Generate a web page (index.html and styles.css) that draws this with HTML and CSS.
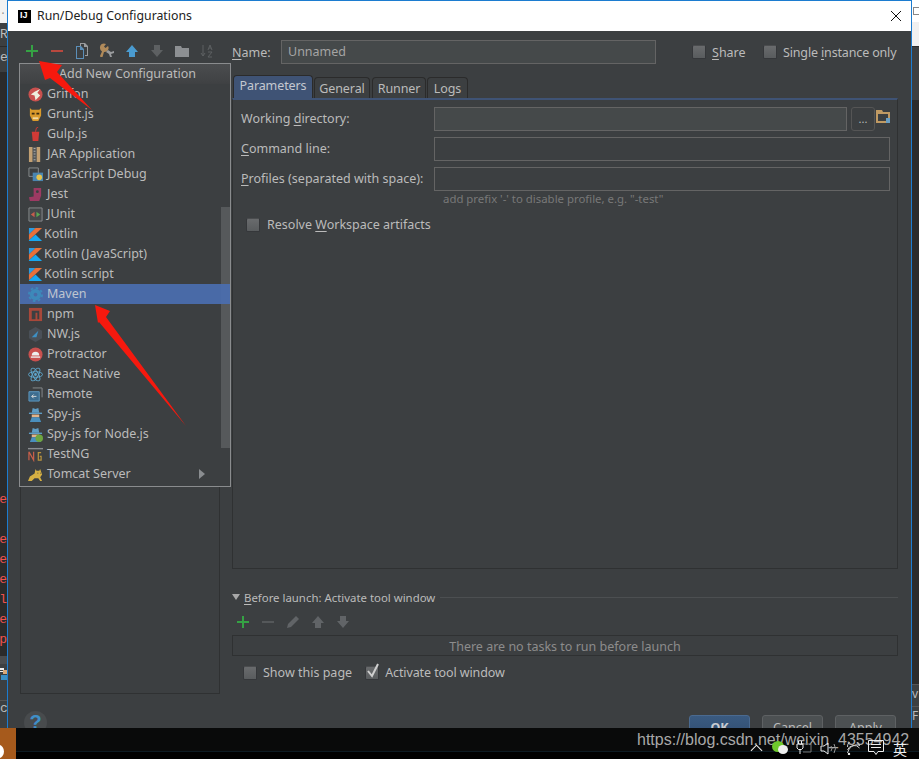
FILE: index.html
```html
<!DOCTYPE html>
<html lang="en">
<head>
<meta charset="utf-8">
<title>Run/Debug Configurations</title>
<link rel="stylesheet" href="styles.css">
</head>
<body>
<div class="screen">
  <div class="behind behind-left">
    <div class="bl-a">...</div>
    <div class="bl-b">R</div>
    <div class="bl-c">e</div>
    <div class="bl-log">
      <span>e</span><span class="gap">e</span><span>ne</span><span>e</span><span>al</span><span>e</span><span>rp</span>
    </div>
    <div class="bl-d"><svg class="bl-user" viewBox="0 0 7 12"><path d="M0 0h4v2H0zM0 3h4v1H0z" fill="#eee"/><path d="M3 2h4v4H3z" fill="#d9a878"/><path d="M1 7h6v5H1z" fill="#3b8fc4"/></svg></div>
    <div class="bl-e">c</div>
  </div>
  <div class="behind behind-right">
    <div class="br-a"><span class="br-win"></span></div>
    <div class="br-b"></div>
    <div class="br-c"></div>
    <div class="br-d">v</div>
    <div class="br-e">F</div>
  </div>

  <div class="dialog">
    <header class="titlebar">
      <span class="ij"><span>IJ</span></span>
      <span class="title">Run/Debug Configurations</span>
      <svg class="close" width="12" height="12" viewBox="0 0 12 12"><path d="M1 1l10 10M11 1L1 11" stroke="#111" stroke-width="1" fill="none"/></svg>
    </header>
    <div class="content">
      <aside class="left">
        <div class="toolbar">
          <svg class="ti" viewBox="0 0 16 16"><path d="M7 2h2v5h5v2H9v5H7V9H2V7h5z" fill="#35a244"/></svg>
          <svg class="ti" viewBox="0 0 16 16"><path d="M2 7h12v2H2z" fill="#b8483e"/></svg>
          <svg class="ti" viewBox="0 0 16 16"><path d="M6 0h5l3 3v10h-3v-1h2V4h-3V1H7v2H6z" fill="#9a9c9e"/><path d="M2 3h5l3 3v10H2zm1 1v11h6V7H6V4z" fill="#5b8fb9"/></svg>
          <svg class="ti" viewBox="0 0 16 16"><path d="M1 5a4 4 0 0 1 6-4L5 3.500 6.500 5 9 3a4 4 0 0 1-4 6L3.500 14H1.500l-.5-1L3 8.500A4 4 0 0 1 1 5z" fill="#b08a5a"/><path d="M7 9l2-2 3 2 3-1v2l-3 1 1 3h-2l-1-3z" fill="#9a9c9e"/></svg>
          <svg class="ti" viewBox="0 0 16 16"><path d="M8 2l6 7h-3v5H5V9H2z" fill="#4a9bd0"/></svg>
          <svg class="ti" viewBox="0 0 16 16"><path d="M8 14l6-7h-3V2H5v5H2z" fill="#5d6062"/></svg>
          <svg class="ti" viewBox="0 0 16 16"><path d="M1 3h6l1 2h7v9H1z" fill="#8d9093"/></svg>
          <svg class="ti" viewBox="0 0 16 16"><path d="M4 2v11M2 10l2 3 2-3" stroke="#5d6062" fill="none"/><path d="M9 7l2-5 2 5M10 5h2M9 9h4l-4 5h4" stroke="#5d6062" fill="none"/></svg>
        </div>
        <div class="tree"></div>
        <div class="help">?</div>
      </aside>

      <main class="right">
        <div class="name-row">
          <label class="lbl"><u>N</u>ame:</label>
          <div class="field name-field">Unnamed</div>
          <span class="cb share-cb"></span><span class="cb-text share"><u>S</u>hare</span>
          <span class="cb single-cb"></span><span class="cb-text single">Single <u>i</u>nstance only</span>
        </div>

        <div class="tabs">
          <span class="tab active">Parameters</span>
          <span class="tab t-general">General</span>
          <span class="tab t-runner">Runner</span>
          <span class="tab t-logs">Logs</span>
        </div>
        <section class="panel">
          <div class="form-row">
            <span class="form-label">Working <u>d</u>irectory:</span>
            <div class="field disabled grow"></div>
            <div class="browse">...</div>
            <svg class="folder" viewBox="0 0 14 13"><path d="M0 0h6l1 2h7v11H0z" fill="#c09a63"/><path d="M2 4h10v7H2z" fill="#3c3f41"/><path d="M10 8h4v5h-4z" fill="#6a9fc4"/></svg>
          </div>
          <div class="form-row">
            <span class="form-label"><u>C</u>ommand line:</span>
            <div class="field grow"></div>
          </div>
          <div class="form-row">
            <span class="form-label"><u>P</u>rofiles (separated with space):</span>
            <div class="field grow"></div>
          </div>
          <div class="hint">add prefix '-' to disable profile, e.g. "-test"</div>
          <div class="resolve"><span class="cb"></span><span class="cb-text">Resolve <u>W</u>orkspace artifacts</span></div>
        </section>

        <div class="before-head">
          <svg class="tri" viewBox="0 0 8 6"><path d="M0 0h8L4 6z" fill="#a8a8a8"/></svg>
          <span><u>B</u>efore launch: Activate tool window</span>
          <span class="rule"></span>
        </div>
        <div class="before-tools">
          <svg class="ti" viewBox="0 0 16 16"><path d="M7 2h2v5h5v2H9v5H7V9H2V7h5z" fill="#35a244"/></svg>
          <svg class="ti" viewBox="0 0 16 16"><path d="M2 7h12v2H2z" fill="#55585a"/></svg>
          <svg class="ti" viewBox="0 0 16 16"><path d="M11 2l3 3-8 8-4 1 1-4z" fill="#616467"/></svg>
          <svg class="ti" viewBox="0 0 16 16"><path d="M8 2l6 7h-3v5H5V9H2z" fill="#616467"/></svg>
          <svg class="ti" viewBox="0 0 16 16"><path d="M8 14l6-7h-3V2H5v5H2z" fill="#616467"/></svg>
        </div>
        <div class="tasks">There are no tasks to run before launch</div>
        <div class="opts">
          <span class="cb"></span><span class="cb-text">Show this page</span>
          <span class="cb checked activate-cb"><svg viewBox="0 0 14 17"><path d="M2 8l4 5L12 1" stroke="#cfcfcf" stroke-width="2" fill="none"/></svg></span><span class="cb-text activate">Activate tool window</span>
        </div>
        <div class="buttons">
          <span class="btn primary">OK</span>
          <span class="btn">Cancel</span>
          <span class="btn">Apply</span>
        </div>
      </main>
    </div>
  </div>

  <div class="popup">
    <div class="popup-title">Add New Configuration</div>
    <div class="popup-body">
      <ul class="list">
        <li><svg class="ic" viewBox="0 0 16 16"><circle cx="8" cy="8" r="7.500" fill="#c9504e"/><path d="M3 8l4-3 6-3-3 4 3 3-5 5-1-5z" fill="#eed"/></svg>Griffon</li>
        <li><svg class="ic" viewBox="0 0 16 16"><path d="M2 1l2 2h8l2-2v8l-3 6H5L2 9z" fill="#d99a2b"/><path d="M4 6h3v2H4zM9 6h3v2H9z" fill="#3b2a10"/><path d="M5 11h6v2H5z" fill="#f2d9a0"/></svg>Grunt.js</li>
        <li><svg class="ic" viewBox="0 0 16 16"><path d="M4 5h8l-1 10H5z" fill="#d13a36"/><path d="M8 5l1-4 2-1" stroke="#d13a36" fill="none"/></svg>Gulp.js</li>
        <li><svg class="ic" viewBox="0 0 16 16"><path d="M1 0h4v16H1zM9 0h4v16H9z" fill="#c2a073"/><path d="M5 0h4v16H5z" fill="#55585a"/><path d="M6 1h2v1H6zM6 4h2v1H6zM6 7h2v1H6zM6 10h2v1H6zM6 13h2v1H6z" fill="#aaa"/></svg>JAR Application</li>
        <li><svg class="ic" viewBox="0 0 16 16"><path d="M1 1h10v9H1z" fill="none" stroke="#8a8d90"/><path d="M5 6h11v9H5z" fill="#4a85b0"/><circle cx="12" cy="11" r="3" fill="#e6c34a"/></svg>JavaScript Debug</li>
        <li><svg class="ic" viewBox="0 0 16 16"><path d="M6 1h8v8l-2 6H2l-1-4 5-1z" fill="#9c3a63"/><circle cx="10" cy="5" r="1.500" fill="#3c3f41"/></svg>Jest</li>
        <li><svg class="ic" viewBox="0 0 16 16"><path d="M1 1h14v14H1z" fill="#45484a" stroke="#8a8d90"/><path d="M7 5v6L3 8z" fill="#c65d4d"/><path d="M9 5v6l4-3z" fill="#5aa552"/></svg>JUnit</li>
        <li class="kot"><svg class="ic" viewBox="0 0 16 16"><path d="M1 1h7L1 8z" fill="#2c9be0"/><path d="M8 1h7L1 14V8z" fill="#e8703a"/><path d="M8 8l7 7H1v-1z" fill="#18a7f0"/></svg>Kotlin</li>
        <li class="kot"><svg class="ic" viewBox="0 0 16 16"><path d="M1 1h7L1 8z" fill="#2c9be0"/><path d="M8 1h7L1 14V8z" fill="#e8703a"/><path d="M8 8l7 7H1v-1z" fill="#18a7f0"/></svg>Kotlin (JavaScript)</li>
        <li class="kot"><svg class="ic" viewBox="0 0 16 16"><path d="M1 1h7L1 8z" fill="#2c9be0"/><path d="M8 1h7L1 14V8z" fill="#e8703a"/><path d="M8 8l7 7H1v-1z" fill="#18a7f0"/></svg>Kotlin script</li>
        <li class="sel"><svg class="ic" viewBox="0 0 16 16"><circle cx="8" cy="8" r="6" fill="#3e8fc4"/><circle cx="8" cy="8" r="7" fill="none" stroke="#3e8fc4" stroke-width="2" stroke-dasharray="2.750 2.750"/><circle cx="8" cy="8" r="2" fill="#4b6eaf"/></svg>Maven</li>
        <li><svg class="ic" viewBox="0 0 16 16"><path d="M1 1h14v14H1z" fill="#a8483a"/><path d="M4 4h8v9h-2V6H8v7H4z" fill="#3c3f41"/></svg>npm</li>
        <li><svg class="ic" viewBox="0 0 16 16"><path d="M8 0l7 4v8l-7 4-7-4V4z" fill="#4a5058"/><path d="M4 11l7-7-2 7z" fill="#3e8fc4"/></svg>NW.js</li>
        <li><svg class="ic" viewBox="0 0 16 16"><circle cx="8" cy="8" r="7.500" fill="#c9504e"/><path d="M4 9a4 4 0 0 1 8 0z" fill="#eee"/><path d="M3 10h10v1.500H3z" fill="#eee"/></svg>Protractor</li>
        <li><svg class="ic" viewBox="0 0 16 16"><g fill="none" stroke="#5fa8cf"><ellipse cx="8" cy="8" rx="7.500" ry="3"/><ellipse cx="8" cy="8" rx="7.500" ry="3" transform="rotate(60 8 8)"/><ellipse cx="8" cy="8" rx="7.500" ry="3" transform="rotate(120 8 8)"/></g><circle cx="8" cy="8" r="1.500" fill="#5fa8cf"/></svg>React Native</li>
        <li><svg class="ic" viewBox="0 0 16 16"><path d="M5 1h10v10" fill="none" stroke="#8a8d90"/><path d="M1 5h11v10H1z" fill="#3d6c8e" stroke="#5f9cc4"/><path d="M9 10H4M6 8l-2 2 2 2" stroke="#ddd" fill="none"/></svg>Remote</li>
        <li><svg class="ic" viewBox="0 0 16 16"><path d="M4 6l1-5 3 1 3-1 1 5z" fill="#5f9cc4"/><path d="M1 6h14v1.500H1z" fill="#5f9cc4"/><path d="M4 8h8v3H4z" fill="#e2b48a"/><path d="M2 16l2-5h8l2 5z" fill="#4a8fbe"/></svg>Spy-js</li>
        <li><svg class="ic" viewBox="0 0 16 16"><path d="M4 6l1-5 3 1 3-1 1 5z" fill="#5f9cc4"/><path d="M1 6h14v1.500H1z" fill="#5f9cc4"/><path d="M4 8h8v3H4z" fill="#e2b48a"/><path d="M2 16l2-5h8l2 5z" fill="#4a8fbe"/><circle cx="12" cy="12" r="4" fill="#6ea53f"/></svg>Spy-js for Node.js</li>
        <li><svg class="ic" viewBox="0 0 16 16"><path d="M0 1h16v1.500H0z" fill="#8a8d90"/><path d="M1 5v9M1 5l5 9V5" stroke="#c9604a" stroke-width="1.300" fill="none"/><path d="M14 6h-3v8h3v-4h-1.500" stroke="#b8923f" stroke-width="1.300" fill="none"/></svg>TestNG</li>
        <li><svg class="ic" viewBox="0 0 16 16"><path d="M0 15l2-5 5-3 1-5 1 2h3l1-2 2 6-2 3 2 4h-2l-2-3H7l-3 3z" fill="#d6b043"/><path d="M10 6h1v1h-1zM13 6h1v1h-1z" fill="#3c3f41"/></svg><span class="li-text">Tomcat Server</span><svg class="sub" viewBox="0 0 6 10"><path d="M0 0l6 5-6 5z" fill="#8a8d90"/></svg></li>
      </ul>
      <div class="scroll"><div class="thumb"></div></div>
    </div>
  </div>

  <svg class="arrows" viewBox="0 0 919 759">
    <path d="M39 61l23 4-5 7 35 38-42-32-5 2z" fill="#f6190e"/>
    <path d="M95 305l15 6-4 6 80 109-87-104-1 1z" fill="#f6190e"/>
  </svg>

  <footer class="taskbar">
    <div class="start"></div>
    <div class="taskline"></div>
    <div class="mark">https://blog.csdn.net/weixin_43554942</div>
    <div class="tray">
      <svg class="t-chev" viewBox="0 0 14 8"><path d="M1 7l6-6 6 6" stroke="#eee" fill="none" stroke-width="1.200"/></svg>
      <svg class="t-chat" viewBox="0 0 16 13"><ellipse cx="6" cy="5.500" rx="6" ry="5.500" fill="#6fc92c"/><ellipse cx="11" cy="8.500" rx="5" ry="4.500" fill="#eee"/></svg>
      <svg class="t-plug" viewBox="0 0 16 13"><path d="M2.500 0v3M5.500 0v3M1 3h6v4L5.500 8.500h-3L1 7zM4 8.500V13" stroke="#eee" fill="none"/><path d="M8 3h7v8H7" stroke="#777" fill="none"/></svg>
      <svg class="t-vol" viewBox="0 0 17 13"><path d="M1 4h3l4-3v11L4 9H1z" stroke="#eee" fill="none"/><path d="M11 4q2 2.500 0 5M14 2q3 4.500 0 9" stroke="#999" fill="none"/></svg>
      <svg class="t-wifi" viewBox="0 0 13 13"><path d="M.5 11a10 10 0 0 1 12-8M.5 8a7 7 0 0 1 12-2M.5 5a5 5 0 0 1 12-1" stroke="#ccc" fill="none"/><circle cx="2" cy="12" r="1.200" fill="#eee"/></svg>
      <svg class="t-msg" viewBox="0 0 16 16"><path d="M.5 .5h15v11H10l-2 3-2-3H.5zM3 4.500h10M3 7.500h10" stroke="#eee" fill="none"/></svg>
      <span class="t-lang">英</span>
    </div>
  </footer>
</div>
</body>
</html>
```
FILE: styles.css
```css
* { box-sizing: border-box; }
html, body { margin: 0; padding: 0; background: #000; }
body { font-family: "Noto Sans", "Open Sans", sans-serif; font-size: 12.5px; color: #bbb; }
u { text-underline-offset: 2px; text-decoration-thickness: 1px; }
svg { display: block; }

.screen { position: relative; width: 919px; height: 759px; overflow: hidden; background: #2b2b2b; }

.behind { position: absolute; top: 0; height: 728px; display: flex; flex-direction: column; overflow: hidden; }
.behind-left { left: 0; width: 7px; background: #2b2b2b; font-family: "Liberation Mono", monospace; font-size: 13px; }
.bl-a { height: 23px; background: #f2f2f2; color: #888; font-size: 10px; padding-top: 6px; flex: none; }
.bl-b { height: 24px; background: #3c3f41; color: #bbb; padding-top: 4px; border-bottom: 1px solid #2b2b2b; flex: none; }
.bl-c { height: 26px; background: #3c3f41; color: #bbb; padding-top: 3px; border-bottom: 1px solid #2b2b2b; flex: none; }
.bl-log { margin-top: 417px; display: flex; flex-direction: column; color: #f0524f; align-items: flex-end; width: 7px; flex: none; height: 158px; }
.bl-log span { height: 20px; line-height: 20px; white-space: nowrap; }
.bl-log .gap { margin-top: 20px; }
.bl-d { height: 44px; margin-top: 8px; background: #3c3f41; border-top: 8px solid #4a4c4e; flex: none; padding-top: 4px; }
.bl-user { width: 7px; height: 12px; }
.bl-e { height: 28px; background: #3c3f41; color: #bbb; flex: none; border-top: 1px solid #555; }

.behind-right { right: 0; width: 7px; background: #2b2b2b; }
.br-a { height: 15px; background: #fff; position: relative; }
.br-win { position: absolute; left: 1px; top: 7px; width: 10px; height: 8px; border: 1px solid #888; }
.br-b { height: 31px; background: #f0f0f0; border-top: 7px solid #fff; }
.br-c { height: 54px; background: #3c3f41; border-top: 1px solid #2b2b2b; margin-bottom: 584px; }
.br-d { height: 22px; background: #3c3f41; border-top: 1px solid #555; color: #bbb; font-size: 12px; }
.br-e { height: 22px; background: #3c3f41; border-top: 1px solid #555; color: #bbb; font-size: 12px; }

.dialog { position: absolute; left: 7px; top: 0; width: 905px; height: 759px; border: 1px solid #1c7cd0; background: #3c3f41; display: flex; flex-direction: column; }
.titlebar { height: 30px; flex: none; background: #fff; display: flex; align-items: center; padding: 0 9px 0 10px; color: #222; }
.ij { width: 13px; height: 13px; background: #000; color: #fff; font: bold 9px/10px "Liberation Sans", sans-serif; padding-left: 2px; flex: none; }
.title { margin: 0 0 2px 6px; font-size: 12.3px; flex: 1; white-space: nowrap; }
.close { flex: none; }

.content { flex: 1; display: flex; min-height: 0; }
.left { width: 224px; flex: none; padding: 9px 0 0 12px; display: flex; flex-direction: column; }
.toolbar { display: flex; gap: 9px; height: 24px; padding-left: 4px; align-items: flex-start; padding-top: 3px; }
.ti { width: 16px; height: 16px; flex: none; }
.tree { width: 200px; height: 630px; border: 1px solid #2f3132; flex: none; }
.help { width: 23px; height: 23px; margin: 17px 0 0 4px; border-radius: 50%; background: #484b4d; color: #3f8fc7; font: bold 20px/23px "Liberation Sans", sans-serif; text-align: center; flex: none; }

.right { width: 666px; flex: none; padding-top: 9px; display: flex; flex-direction: column; }
.name-row { display: flex; align-items: center; height: 24px; white-space: nowrap; }
.lbl { width: 49px; flex: none; }
.field { height: 24px; background: #3c3f41; border: 1px solid #646464; flex: none; }
.name-field { width: 375px; background: #45494a; color: #a4a4a4; padding-left: 6px; line-height: 22px; }
.grow { flex: 1; }
.disabled { background: #45494a; }
.cb { width: 14px; height: 14px; flex: none; display: inline-block; background: linear-gradient(#696b6d, #595c5e); border: 1px solid #35373a; border-top-color: #4a4c4e; border-radius: 2px; position: relative; }
.cb-text { margin-left: 6px; white-space: nowrap; padding-bottom: 2px; }
.name-row .cb-text { padding-bottom: 0; }
.share-cb { margin-left: 36px; }
.share { width: 51px; flex: none; }
.single { letter-spacing: -0.15px; }
.activate { letter-spacing: -0.1px; }

.tabs { display: flex; margin-top: 11px; height: 24px; align-items: flex-end; padding-left: 1px; gap: 1px; }
.tab { height: 22px; line-height: 21px; background: #3c3f41; border: 1px solid #2b2b2b; border-bottom: 0; border-radius: 4px 4px 0 0; white-space: nowrap; text-align: center; letter-spacing: -0.1px; }
.t-general { width: 56px; }
.t-runner { width: 54px; margin-left: 1px; }
.t-logs { width: 41px; }
.tab.active { height: 24px; background: #3f5375; width: 80px; line-height: 20px; color: #c4c8d0; }
.panel { height: 471px; border: 1px solid #2f3132; border-top: 2px solid #3f5375; padding: 7px 7px 0 8px; flex: none; margin-top: -1px; }
.form-row { display: flex; align-items: center; height: 24px; margin-bottom: 6px; }
.form-label { width: 193px; flex: none; white-space: nowrap; padding-bottom: 2px; }
.browse { width: 24px; height: 24px; margin-left: 4px; border: 1px solid #555; border-radius: 3px; text-align: center; line-height: 22px; font-size: 11px; flex: none; }
.folder { width: 14px; height: 13px; margin: -5px 0 0 1px; flex: none; }
.hint { margin: -6px 0 0 202px; color: #787878; font-size: 11.4px; line-height: 16px; }
.resolve { display: flex; align-items: center; margin: 10px 0 0 5px; height: 16px; }
.resolve .cb-text { margin-left: 7px; }

.before-head { display: flex; align-items: center; margin-top: 20px; height: 16px; font-size: 11.4px; white-space: nowrap; }
.tri { width: 8px; height: 6px; margin-right: 4px; flex: none; }
.rule { flex: 1; height: 1px; background: #4c4f51; margin-left: 5px; }
.before-tools { display: flex; gap: 9px; padding-left: 3px; margin-top: 9px; height: 21px; }
.tasks { height: 21px; border: 1px solid #2f3132; text-align: center; line-height: 21px; color: #8c8c8c; }
.opts { display: flex; align-items: center; height: 20px; margin-top: 7px; padding-left: 11px; white-space: nowrap; }
.activate-cb { margin-left: 13px; }
.checked svg { position: absolute; left: 0; top: -4px; width: 14px; height: 17px; }
.buttons { display: flex; gap: 12px; justify-content: flex-end; margin-top: 32px; padding-right: 2px; }
.btn { width: 61px; height: 26px; border-radius: 3px; background: #4c5052; border: 1px solid #5e6163; text-align: center; line-height: 24px; }
.btn.primary { background: linear-gradient(#3a5a80, #2f4c6f); border-color: #4a6a90; font-weight: bold; color: #c8ccd0; }

.popup { position: absolute; left: 19px; top: 63px; width: 212px; height: 424px; border: 1px solid #8a8c8e; background: #3c3f41; display: flex; flex-direction: column; }
.popup-title { height: 20px; flex: none; background: linear-gradient(#4b4d4f, #3f4143); text-align: center; line-height: 20px; padding-left: 5px; color: #bbb; white-space: nowrap; }
.popup-body { flex: 1; display: flex; min-height: 0; }
.list { list-style: none; margin: 0; padding: 0; width: 201px; flex: none; }
.list li { height: 20px; display: flex; align-items: center; padding: 0 0 0 8px; line-height: 20px; white-space: nowrap; }
.list .ic { width: 15px; height: 15px; margin: 0 4px 0 0; flex: none; }
.list li.kot .ic { margin-right: 1px; }
.list li.sel { background: #4b6eaf; width: 210px; position: relative; z-index: 1; opacity: .93; color: #c8d0dc; }
.li-text { width: 152px; flex: none; }
.sub { width: 6px; height: 10px; }
.scroll { width: 9px; flex: none; padding-top: 123px; }
.thumb { height: 241px; background: #56595b; }

.arrows { position: absolute; left: 0; top: 0; width: 919px; height: 759px; pointer-events: none; }

.taskbar { position: absolute; left: 0; bottom: 0; width: 919px; height: 31px; background: #090a0a; }
.start { position: absolute; left: 0; top: 0; width: 16px; height: 31px; background: #a65a1c; overflow: hidden; }
.start::after { content: ""; position: absolute; left: -6px; top: 17px; width: 10px; height: 13px; border-radius: 50%; background: #fff; }
.taskline { position: absolute; left: 16px; right: 0; top: 23px; height: 8px; background: #000; border-top: 1px solid #0c1a22; }
.tray { position: absolute; left: 0; top: 0; width: 919px; height: 31px; }
.tray svg { position: absolute; }
.t-chev { left: 750px; top: 16px; width: 13px; height: 8px; }
.t-chat { left: 772px; top: 13px; width: 16px; height: 13px; }
.t-plug { left: 796px; top: 13px; width: 16px; height: 13px; }
.t-vol { left: 820px; top: 14px; width: 17px; height: 13px; }
.t-wifi { left: 847px; top: 14px; width: 13px; height: 13px; }
.t-msg { left: 868px; top: 12px; width: 16px; height: 16px; }
.t-lang { position: absolute; left: 893px; top: 11px; font: 14px/20px "Noto Sans CJK SC", sans-serif; color: #eee; }
.mark { position: absolute; left: 637px; top: 0; font: 16px/24px "Liberation Sans", sans-serif; color: #a8a8a8; white-space: nowrap; }
```
